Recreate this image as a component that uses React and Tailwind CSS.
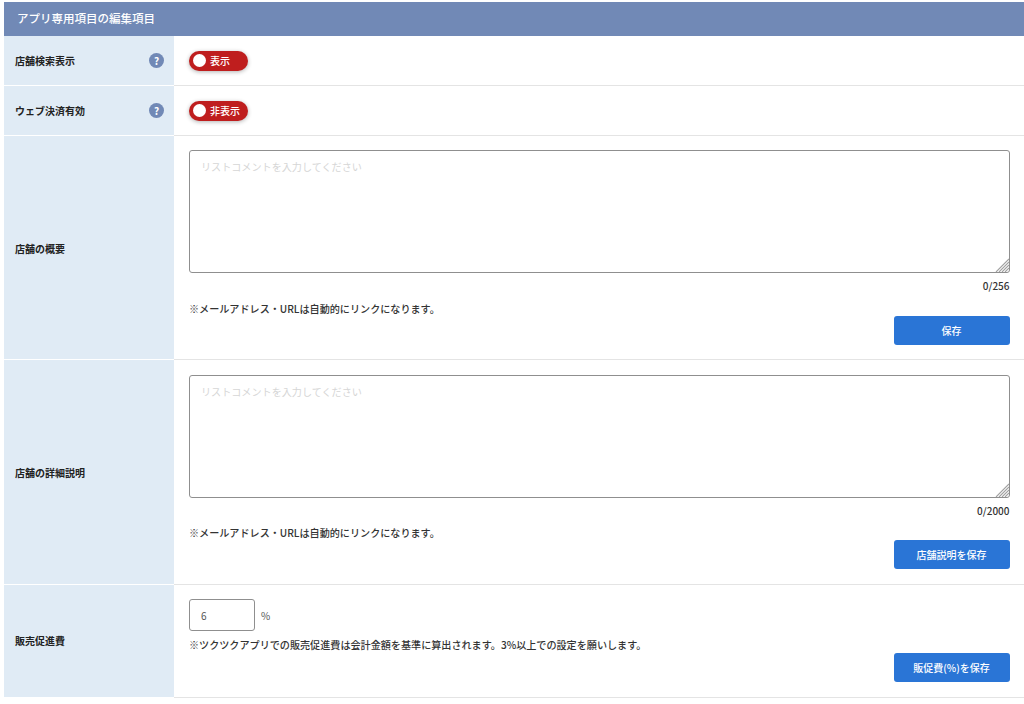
const FONT = "font-['Noto_Sans_CJK_JP','Noto_Sans',sans-serif]";

const Help = () => (
    <span className="flex w-[15px] h-[15px] rounded-full bg-[#7189b6] text-white text-[10px] font-bold items-center justify-center leading-none">?</span>
);

const Toggle = ({ label }) => (
    <div className="flex items-center w-[59px] h-[20px] rounded-full bg-[#bf1e1e] shadow-[0_1px_4px_rgba(0,0,0,0.3)] pl-[4px] gap-[4px]">
        <span className="w-[13px] h-[13px] rounded-full bg-white" />
        <span className="text-white text-[10px] font-medium leading-none">{label}</span>
    </div>
);

const Row = ({ label, help, className, labelClass, children }) => (
    <div className={`flex ${className}`}>
        <div className={`w-[170px] shrink-0 bg-[#e0ebf5] border-b border-white flex items-center justify-between pl-[11px] pr-[10px] ${labelClass}`}>
            <span className="text-[10px] font-bold text-[#222222]">{label}</span>
            {help && <Help />}
        </div>
        <div className="flex-1 min-w-0 border-b border-[#e4e4e4] pl-[15px] pr-[14.5px]">{children}</div>
    </div>
);

const SaveButton = ({ children }) => (
    <button className="w-[116px] h-[29px] rounded-[3px] bg-[#2a75d6] text-white text-[10px] font-medium flex items-center justify-center">
        {children}
    </button>
);

const Comment = ({ max, button, top, noteTop }) => (
    <div className={top}>
        <div className="relative">
            <textarea
                placeholder="リストコメントを入力してください"
                className="block w-full h-[123px] resize-none border border-[#8f8f8f] rounded-[3px] px-[11px] py-[7.5px] text-[10.1px] leading-[16px] placeholder:text-[#d6d6d6] outline-none"
            />
            <svg className="absolute right-[1px] bottom-[1px]" width="14" height="14" viewBox="0 0 14 14" stroke="#a0a0a0" strokeWidth="1.1">
                <path d="M1 14 14 1M4 14 14 4M7 14 14 7M10 14 14 10" />
            </svg>
        </div>
        <p className="text-right text-[10px] font-medium leading-[14px] mt-[6px] text-[#333333]">0/{max}</p>
        <p className={`text-[10.1px] font-medium leading-[14px] text-[#333333] ${noteTop}`}>※メールアドレス・URLは自動的にリンクになります。</p>
        <div className="flex justify-end">
            <SaveButton>{button}</SaveButton>
        </div>
    </div>
);

export default function App() {
    return (
        <div className={`${FONT} bg-white pt-[2px] pl-[4px] h-[704px] overflow-hidden`}>
            <div className="h-[34px] bg-[#7189b6] text-white text-[11.5px] font-medium flex items-center pl-[13px]">
                アプリ専用項目の編集項目
            </div>

            <Row label="店舗検索表示" help className="h-[50px]">
                <div className="h-full flex items-center"><Toggle label="表示" /></div>
            </Row>
            <Row label="ウェブ決済有効" help className="h-[50px]">
                <div className="h-full flex items-center"><Toggle label="非表示" /></div>
            </Row>
            <Row label="店舗の概要" className="h-[224px]" labelClass="pt-[1px]">
                <Comment max="256" button="保存" top="pt-[14px]" noteTop="mt-[9px]" />
            </Row>
            <Row label="店舗の詳細説明" className="h-[225px]">
                <Comment max="2000" button="店舗説明を保存" top="pt-[15px]" noteTop="mt-[8px]" />
            </Row>
            <Row label="販売促進費" className="h-[113px]" labelClass="pb-[1px]">
                <div className="pt-[14px]">
                    <div className="flex items-center gap-[6px]">
                        <input
                            defaultValue="6"
                            className="w-[66px] h-[32px] border border-[#8f8f8f] rounded-[3px] px-[11px] text-[10px] text-[#555555] outline-none"
                        />
                        <span className="text-[10px] text-[#555555]">%</span>
                    </div>
                    <p className="text-[10.1px] font-medium leading-[14px] mt-[7px] text-[#333333]">※ツクツクアプリでの販売促進費は会計金額を基準に算出されます。3%以上での設定を願いします。</p>
                    <div className="flex justify-end mt-[1px]">
                        <SaveButton>販促費(%)を保存</SaveButton>
                    </div>
                </div>
            </Row>
        </div>
    );
}
